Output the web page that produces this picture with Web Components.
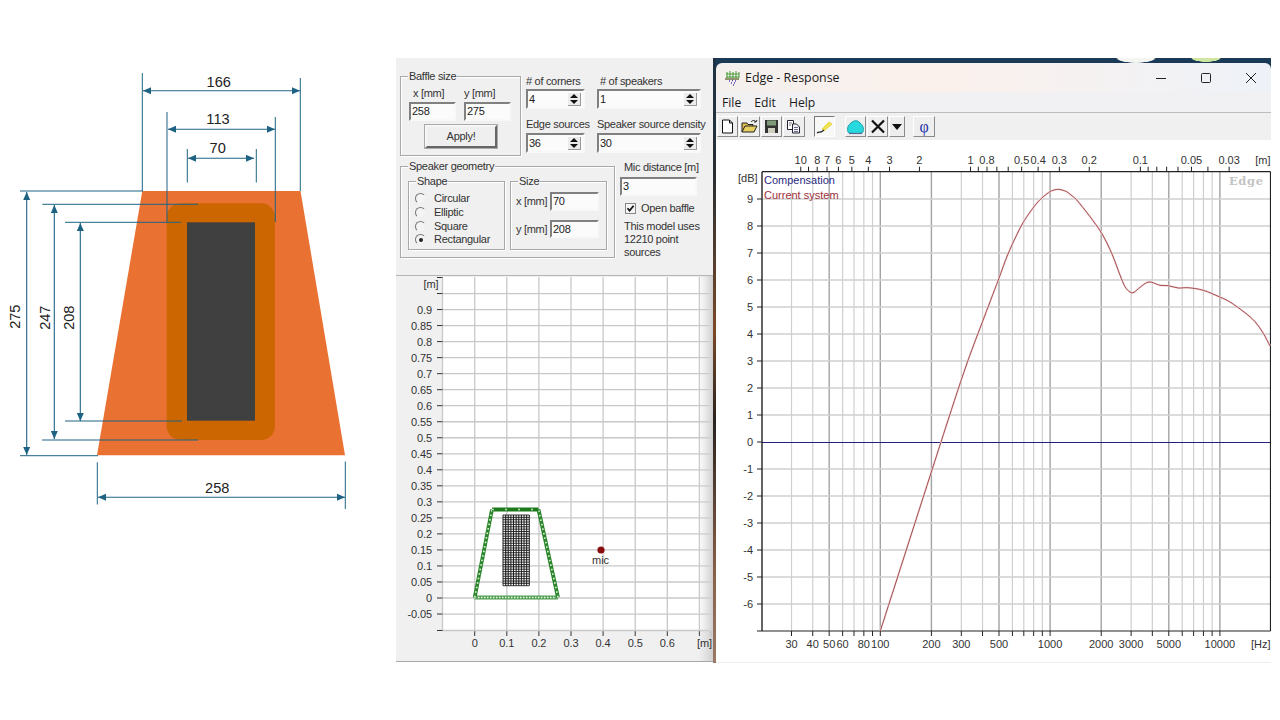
<!DOCTYPE html>
<html>
<head>
<meta charset="utf-8">
<title>Edge baffle</title>
<style>
    html, body { margin: 0; background: #fff; }
    body { width: 1280px; height: 720px; overflow: hidden; font-family: "Liberation Sans", Arial, sans-serif; }
    .page { display: flex; align-items: flex-start; }
</style>
</head>
<body>
<div class="page">
    <dim-drawing></dim-drawing>
    <baffle-panel></baffle-panel>
    <response-window title-text="Edge - Response"></response-window>
</div>

<script>
const LOG_TICKS = [30, 40, 50, 60, 70, 80, 90, 100, 200, 300, 400, 500, 600, 700, 800, 900, 1000, 2000, 3000, 4000, 5000, 6000, 7000, 8000, 9000, 10000]

function line(x1, y1, x2, y2, color, width) {
    return `<line x1="${x1}" y1="${y1}" x2="${x2}" y2="${y2}" stroke="${color}" stroke-width="${width}"/>`
}

function label(x, y, text, anchor, color) {
    return `<text x="${x}" y="${y}" text-anchor="${anchor || 'middle'}" fill="${color || '#333'}">${text}</text>`
}

// runs a smooth path through the sampled points
function smooth(points) {
    let d = `M${points[0][0]} ${points[0][1]}`
    for (let i = 0; i < points.length - 1; i++) {
        const p0 = points[Math.max(i - 1, 0)]
        const p1 = points[i]
        const p2 = points[i + 1]
        const p3 = points[Math.min(i + 2, points.length - 1)]
        d += ` C${p1[0] + (p2[0] - p0[0]) / 6} ${p1[1] + (p2[1] - p0[1]) / 6} ${p2[0] - (p3[0] - p1[0]) / 6} ${p2[1] - (p3[1] - p1[1]) / 6} ${p2[0]} ${p2[1]}`
    }
    return d
}

class DimDrawing extends HTMLElement {
    constructor() {
        super()
        this.attachShadow({ mode: 'open' })
        const blue = '#1f6384'
        const hArrow = (x1, x2, y) => line(x1, y, x2, y, blue, 1.1) +
            `<polygon points="${x1},${y} ${x1 + 8},${y - 3.5} ${x1 + 8},${y + 3.5}" fill="${blue}"/>` +
            `<polygon points="${x2},${y} ${x2 - 8},${y - 3.5} ${x2 - 8},${y + 3.5}" fill="${blue}"/>`
        const vArrow = (x, y1, y2) => line(x, y1, x, y2, blue, 1.1) +
            `<polygon points="${x},${y1} ${x - 3.5},${y1 + 8} ${x + 3.5},${y1 + 8}" fill="${blue}"/>` +
            `<polygon points="${x},${y2} ${x - 3.5},${y2 - 8} ${x + 3.5},${y2 - 8}" fill="${blue}"/>`
        const upText = (x, y, text) => `<text transform="translate(${x} ${y}) rotate(-90)" text-anchor="middle" fill="#222">${text}</text>`

        const ext = [
            [142.3, 73, 142.3, 191], [300.3, 78, 300.3, 191],
            [167, 112, 167, 222], [275.3, 117, 275.3, 222],
            [187.3, 149, 187.3, 182.5], [256.3, 149, 256.3, 182.5],
            [20, 191, 143, 191], [42.3, 204.3, 198, 204.3], [65, 222.3, 181, 222.3],
            [65, 421, 182, 421], [42, 440, 198, 440], [20, 455.7, 98, 455.7],
            [97.3, 462.3, 97.3, 504.5], [345.3, 461.5, 345.3, 509]
        ].map(l => line(l[0], l[1], l[2], l[3], blue, 1)).join('')

        this.shadowRoot.innerHTML = `
            <style>
                :host { display: block; width: 396px; height: 720px; flex: none; }
                svg { display: block; font: 14.6px "Liberation Sans", Arial, sans-serif; }
            </style>
            <svg width="396" height="720" viewBox="0 0 396 720">
                <polygon points="142.3,191 300.5,191 345,455.3 97,455.3" fill="#e97132"/>
                <rect x="166.7" y="203.3" width="108.3" height="236.7" rx="14" fill="#cc6600"/>
                <rect x="187" y="222.3" width="68" height="198.4" fill="#404040"/>
                ${ext}
                ${hArrow(143, 300, 90.7)}
                ${hArrow(168, 275, 129.3)}
                ${hArrow(188, 254, 158.3)}
                ${hArrow(98, 345, 497.3)}
                ${vArrow(26.7, 192, 455)}
                ${vArrow(54.3, 205, 439)}
                ${vArrow(80.3, 223, 421)}
                ${label(218.7, 87, '166', 'middle', '#222')}
                ${label(218, 124.3, '113', 'middle', '#222')}
                ${label(217.7, 153.3, '70', 'middle', '#222')}
                ${label(217.3, 493.3, '258', 'middle', '#222')}
                ${upText(20, 316.7, '275')}
                ${upText(50, 317.7, '247')}
                ${upText(73.5, 317.7, '208')}
            </svg>
        `
    }
}

class UiGroup extends HTMLElement {
    constructor() {
        super()
        this.attachShadow({ mode: 'open' })
        this.shadowRoot.innerHTML = `
            <style>
                :host { display: block; box-sizing: border-box; position: relative; border: 1px solid #a8a8a8; box-shadow: 1px 1px 0 #fff, inset 1px 1px 0 #fff; }
                .legend { position: absolute; left: 7px; top: -7px; padding: 0 1px; background: #f0f0f0; line-height: 13px; white-space: nowrap; }
            </style>
            <div class="legend">${this.getAttribute('label')}</div>
            <slot></slot>
        `
    }
}

class UiField extends HTMLElement {
    constructor() {
        super()
        this.attachShadow({ mode: 'open' })
        const spin = this.hasAttribute('spin')
        this.shadowRoot.innerHTML = `
            <style>
                :host { display: flex; box-sizing: border-box; align-items: center; justify-content: space-between; background: #fbfbfb; border: 2px solid; border-color: #808080 #f8f8f8 #f8f8f8 #808080; padding: 0 1px 0 1px; height: 20px; color: #222; }
                .spin { display: flex; flex-direction: column; gap: 2px; padding: 1px 2px; margin-right: 1px; background: #ececec; border-right: 1px solid #999; border-bottom: 1px solid #999; }
                .up, .down { width: 0; height: 0; border-left: 4px solid transparent; border-right: 4px solid transparent; }
                .up { border-bottom: 4px solid #111; }
                .down { border-top: 4px solid #111; }
            </style>
            <span>${this.getAttribute('value')}</span>
            ${spin ? '<div class="spin"><div class="up"></div><div class="down"></div></div>' : ''}
        `
    }
}

class UiRadio extends HTMLElement {
    constructor() {
        super()
        this.attachShadow({ mode: 'open' })
        this.shadowRoot.innerHTML = `
            <style>
                :host { display: flex; align-items: center; gap: 8px; height: 13.7px; white-space: nowrap; }
                .dot { box-sizing: border-box; width: 11px; height: 11px; border-radius: 50%; border: 1px solid; border-color: #777 #eee #eee #777; background: #f4f4f4; display: flex; align-items: center; justify-content: center; }
                .dot i { width: 4px; height: 4px; border-radius: 50%; background: #222; }
            </style>
            <div class="dot">${this.hasAttribute('checked') ? '<i></i>' : ''}</div><slot></slot>
        `
    }
}

class UiCheck extends HTMLElement {
    constructor() {
        super()
        this.attachShadow({ mode: 'open' })
        this.shadowRoot.innerHTML = `
            <style>
                :host { display: flex; align-items: center; gap: 5px; white-space: nowrap; height: 11px; }
                svg { display: block; flex: none; }
            </style>
            <svg width="11" height="11" viewBox="0 0 11 11">
                <rect x="0.5" y="0.5" width="10" height="10" fill="#f4f4f4" stroke="#888"/>
                <path d="M2.5 5.2 L4.6 7.6 L8.6 2.8" fill="none" stroke="#111" stroke-width="1.7"/>
            </svg>
            <slot></slot>
        `
    }
}

class UiButton extends HTMLElement {
    constructor() {
        super()
        this.attachShadow({ mode: 'open' })
        this.shadowRoot.innerHTML = `
            <style>
                :host { display: flex; box-sizing: border-box; align-items: center; justify-content: center; height: 23px; border: 2px solid; border-color: #f6f6f6 #666 #666 #f6f6f6; outline: 1px solid #aaa; background: #efefef; }
            </style>
            <slot></slot>
        `
    }
}

class PositionPlot extends HTMLElement {
    constructor() {
        super()
        this.attachShadow({ mode: 'open' })
        const X = v => 474.7 + v * 321
        const Y = v => 598 - v * 320.5
        const grey = '#c8c8c8'
        let grid = ''
        for (let i = 0; i <= 7; i++) {
            const x = X(i / 10)
            grid += line(x, 277, x, 630.5, grey, 1.3) + line(x, 630.5, x, 636, '#333', 1)
            if (i < 7) grid += label(x, 647, i === 0 ? '0' : (i / 10).toFixed(1))
        }
        grid += line(442.5, 277, 442.5, 630.5, grey, 1.3) + line(711, 630.5, 711, 636, '#333', 1)
        grid += line(442, 630.5, 713, 630.5, grey, 1.3)
        for (let i = -1; i <= 19; i++) {
            const v = i * 0.05
            const y = Y(v)
            grid += line(442.5, y, 713, y, grey, 1.3) + line(437, y, 442.5, y, '#333', 1)
            if (i !== 19) grid += label(432, y + 4, i === 0 ? '0' : String(+v.toFixed(2)), 'end')
        }
        grid += line(437, 277.5, 442.5, 277.5, '#333', 1) + line(437, 630.5, 442.5, 630.5, '#333', 1)
        grid += label(431, 288, '[m]')

        // baffle outline with its edge sources
        const edge = (x1, y1, x2, y2, step, fill, dark) => {
            const len = Math.hypot(x2 - x1, y2 - y1)
            let out = line(x1, y1, x2, y2, dark, 3.8)
            for (let d = 1; d < len; d += step) {
                const cx = x1 + (x2 - x1) * d / len
                const cy = y1 + (y2 - y1) * d / len
                out += `<rect x="${cx - 0.8}" y="${cy - 0.8}" width="1.6" height="1.6" fill="${fill}"/>`
            }
            return out
        }
        const baffle = edge(474.7, 597.5, 558, 597.5, 3, '#eaf5ea', '#4c9c4c') +
            edge(474.7, 597.5, 492, 509.5, 4.6, '#dff0df', '#2b862b') +
            edge(558, 597.5, 538.5, 509.5, 4.6, '#dff0df', '#2b862b') +
            edge(492, 509.5, 538.5, 509.5, 13, '#dff0df', '#1c7a1c')

        let speaker = ''
        for (let i = 0; i <= 10; i++) {
            const x = 503 + i * 2.63
            speaker += line(x, 515, x, 585.7, '#1c1c1c', 1)
        }
        for (let i = 0; i <= 30; i++) {
            const y = 515 + i * 2.357
            speaker += line(503, y, 529.3, y, '#1c1c1c', 0.9)
        }

        this.shadowRoot.innerHTML = `
            <style>
                :host { display: block; height: 385px; background: #f0f0f0; }
                svg { display: block; font: 11px "Liberation Sans", Arial, sans-serif; letter-spacing: -0.1px; }
            </style>
            <svg width="317" height="385" viewBox="396 276 317 385">
                <defs>
                    <linearGradient id="fade" x1="0" x2="1" y1="0" y2="0">
                        <stop offset="0" stop-color="#d8d8d8" stop-opacity="0"/>
                        <stop offset="1" stop-color="#cfcfcf"/>
                    </linearGradient>
                </defs>
                <rect x="442.5" y="277" width="271" height="353.5" fill="#fff"/>
                ${grid}
                ${baffle}
                ${speaker}
                <circle cx="601" cy="550" r="3.6" fill="#8a0d0d"/>
                ${label(600.5, 564, 'mic')}
                <rect x="698" y="276" width="15" height="385" fill="url(#fade)"/>
                ${label(704.5, 647, '[m]')}
            </svg>
        `
    }
}

class BafflePanel extends HTMLElement {
    constructor() {
        super()
        this.attachShadow({ mode: 'open' })
        this.shadowRoot.innerHTML = `
            <style>
                :host { display: block; box-sizing: border-box; flex: none; width: 317px; height: 604px; margin-top: 58px; background: #f0f0f0; border-bottom: 2px solid #a8a8a8; font: 11px/13px "Liberation Sans", Arial, sans-serif; letter-spacing: -0.3px; color: #333; }
                .form { box-sizing: border-box; height: 218px; padding: 16px 0 0 4px; border-bottom: 1px solid #b4b4b4; }
                .top { display: flex; align-items: flex-start; height: 92px; }
                .baffle { width: 121px; height: 80px; margin-top: 2px; padding: 10px 0 0 8px; box-sizing: border-box; }
                .xy { display: grid; grid-template-columns: 47px 47px; column-gap: 8px; }
                .xy span { height: 15px; line-height: 13px; }
                .xy span:first-child { padding-left: 4px; }
                .xy ui-field { height: 19px; }
                .baffle ui-button { width: 72px; margin: 4px 0 0 16px; }
                .counts { display: grid; grid-template-columns: 59px 104px; grid-template-rows: 15px 20px 24px 20px; column-gap: 12px; margin-left: 5px; }
                .counts span { white-space: nowrap; align-self: center; }
                .counts .lbl2 { align-self: end; height: 16px; line-height: 15px; }
                .counts .col2 { padding-left: 3px; }
                .bottom { display: flex; align-items: flex-start; }
                .geometry { box-sizing: border-box; width: 215px; height: 92px; padding: 14px 0 0 7px; display: flex; gap: 5px; }
                .shape, .size { box-sizing: border-box; width: 97px; height: 69px; }
                .shape { padding: 10px 0 0 6px; }
                .size { padding: 10px 0 0 5px; display: grid; grid-template-columns: 34px 49px; grid-template-rows: 19px 18px; row-gap: 9px; align-items: center; }
                .size ui-field { height: 100%; }
                .mic { margin: -6px 0 0 5px; width: 92px; }
                .mic .head { padding-left: 4px; height: 15px; line-height: 15px; white-space: nowrap; }
                .mic ui-field { width: 77px; height: 19px; margin-top: 2px; }
                .mic ui-check { margin: 7px 0 0 5px; }
                .mic p { margin: 6px 0 0 4px; line-height: 13px; }
            </style>
            <div class="form">
                <div class="top">
                    <ui-group class="baffle" label="Baffle size">
                        <div class="xy">
                            <span>x [mm]</span><span>y [mm]</span>
                            <ui-field value="258"></ui-field><ui-field value="275"></ui-field>
                        </div>
                        <ui-button>Apply!</ui-button>
                    </ui-group>
                    <div class="counts">
                        <span># of corners</span><span class="col2"># of speakers</span>
                        <ui-field spin value="4"></ui-field><ui-field spin value="1"></ui-field>
                        <span class="lbl2">Edge sources</span><span class="lbl2">Speaker source density</span>
                        <ui-field spin value="36"></ui-field><ui-field spin value="30"></ui-field>
                    </div>
                </div>
                <div class="bottom">
                    <ui-group class="geometry" label="Speaker geometry">
                        <ui-group class="shape" label="Shape">
                            <ui-radio>Circular</ui-radio>
                            <ui-radio>Elliptic</ui-radio>
                            <ui-radio>Square</ui-radio>
                            <ui-radio checked>Rectangular</ui-radio>
                        </ui-group>
                        <ui-group class="size" label="Size">
                            <span>x [mm]</span><ui-field value="70"></ui-field>
                            <span>y [mm]</span><ui-field value="208"></ui-field>
                        </ui-group>
                    </ui-group>
                    <div class="mic">
                        <div class="head">Mic distance [m]</div>
                        <ui-field value="3"></ui-field>
                        <ui-check>Open baffle</ui-check>
                        <p>This model uses<br>12210 point<br>sources</p>
                    </div>
                </div>
            </div>
            <position-plot></position-plot>
        `
    }
}

class ResponsePlot extends HTMLElement {
    constructor() {
        super()
        this.attachShadow({ mode: 'open' })
        const X = f => 880.3 + 169.8 * (Math.log10(f) - 2)
        const Y = db => 442 - db * 27
        const L = 762, R = 1270.5, T = 171.7, B = 631
        const axis = '#222'
        const major = [50, 100, 200, 500, 1000, 2000, 5000, 10000]
        let g = ''
        for (const f of LOG_TICKS) {
            const x = X(f)
            g += line(x, T, x, B, major.includes(f) ? '#a2a2a2' : '#cfcfcf', major.includes(f) ? 1.4 : 1.2)
            g += line(x, B, x, B + 5, axis, 1)
        }
        for (let db = -6; db <= 9; db++) {
            const y = Y(db)
            if (db !== 0) g += line(L, y, R, y, '#cfcfcf', 1.3)
            g += line(L - 5, y, L, y, axis, 1) + label(753, y + 4, db, 'end')
        }
        g += line(L, 442.5, R, 442.5, '#22227a', 1)
        g += line(L - 5, B, R, B, axis, 1.2)
        g += line(L, T, R, T, axis, 1.2) + line(L, T, L, B, axis, 1.4) + line(R, T, R, B, axis, 1.2)

        for (const m of [10, 9, 8, 7, 6, 5, 4, 3, 2, 1, 0.9, 0.8, 0.7, 0.6, 0.5, 0.4, 0.3, 0.2, 0.1, 0.09, 0.08, 0.07, 0.06, 0.05, 0.04, 0.03]) {
            const x = X(340 / m)
            g += line(x, T - 5, x, T, axis, 1)
        }
        for (const m of [10, 8, 7, 6, 5, 4, 3, 2, 1, 0.8, 0.5, 0.4, 0.3, 0.2, 0.1, 0.05, 0.03]) {
            g += label(X(340 / m), 164, m)
        }
        g += label(1270.5, 164, '[m]', 'end')
        for (const f of [30, 40, 50, 60, 80, 100, 200, 300, 500, 1000, 2000, 3000, 5000, 10000]) {
            g += label(X(f), 648, f)
        }
        g += label(1270.5, 648, '[Hz]', 'end')
        g += label(738, 182, '[dB]', 'start')

        const curve = [[880.3, 631], [941, 442], [965, 369], [982, 323], [998.3, 280], [1008, 254], [1020, 228.3], [1028, 215], [1036.7, 203.3], [1043, 197], [1050, 191.7], [1054, 190], [1058.3, 189.3], [1062, 190], [1066.7, 191.7], [1071, 195], [1076.7, 200], [1090, 216.7], [1101.7, 233.3], [1111.7, 253.3], [1120, 275], [1125, 286.7], [1130, 292], [1134, 292.3], [1140, 287.3], [1146.7, 282.7], [1151.7, 282.3], [1160, 285.3], [1168.3, 285.7], [1178.3, 288], [1188.3, 287.7], [1203.3, 290.3], [1219.7, 297], [1230, 302], [1245, 312.7], [1255, 321.7], [1263.3, 333.3], [1270, 346]]
        const d = smooth(curve)

        this.shadowRoot.innerHTML = `
            <style>
                :host { display: block; flex: 1; background: #fff; border-bottom: 1px solid #eeeeee; }
                svg { display: block; font: 11px "Liberation Sans", Arial, sans-serif; }
                .edge { font: bold 11.5px "DejaVu Serif", serif; letter-spacing: 0.6px; }
            </style>
            <svg width="555" height="522" viewBox="716 140 555 522">
                ${g}
                <path d="${d}" fill="none" stroke="#f4d8d8" stroke-width="2"/>
                <path d="${d}" fill="none" stroke="#9a4044" stroke-width="0.9"/>
                ${label(764, 184, 'Compensation', 'start', '#2a2a80')}
                ${label(764, 199, 'Current system', 'start', '#a03038')}
                <text class="edge" x="1229" y="185" fill="#c4c4c4">Edge</text>
            </svg>
        `
    }
}

class ToolButton extends HTMLElement {
    constructor() {
        super()
        this.attachShadow({ mode: 'open' })
        const pressed = this.hasAttribute('pressed')
        this.shadowRoot.innerHTML = `
            <style>
                :host { display: flex; box-sizing: border-box; align-items: center; justify-content: center; width: ${this.getAttribute('w') || 21}px; height: 21px; background: ${pressed ? '#f8f8f6' : '#eeeeee'}; border: 1px solid; border-color: ${pressed ? '#777 #fff #fff #777' : '#fff #8a8a8a #8a8a8a #fff'}; }
            </style>
            <slot></slot>
        `
    }
}

class ResponseWindow extends HTMLElement {
    constructor() {
        super()
        this.attachShadow({ mode: 'open' })
        this.shadowRoot.innerHTML = `
            <style>
                :host { display: flex; flex-direction: column; flex: none; box-sizing: border-box; width: 558px; height: 605px; margin-top: 58px; border-left: 3px solid; border-image: linear-gradient(#1d3346 0, #2b2f33 20%, #7a4a28 45%, #2a2320 60%, #8a6048 85%, #9a7a66 100%) 1; background: #1b3a57; }
                .strip { height: 5px; background: radial-gradient(ellipse 20px 5px at 420px 0, #f4f4f0 90%, transparent), radial-gradient(ellipse 15px 4px at 490px 0, #cfe6a0 90%, transparent), #1b3a57; }
                .title { display: flex; align-items: center; height: 29px; padding-left: 8px; border-radius: 6px 6px 0 0; background: linear-gradient(90deg, #f4f0ee 0, #fbf1ec 40%, #eef2f8 100%); font: 12.4px "Open Sans", "Noto Sans", sans-serif; color: #1a1a1a; }
                .title svg.logo { margin-right: 4px; }
                .title span { flex: 1; }
                .ctl { display: flex; gap: 33px; padding-right: 14px; }
                .ctl svg { display: block; }
                .menu { display: flex; gap: 13px; height: 20px; align-items: center; padding-left: 6px; background: #f1f1f3; border-bottom: 1px solid #bdbdbd; font: 12.2px "Open Sans", "Noto Sans", sans-serif; color: #1a1a1a; }
                .tools { display: flex; align-items: center; height: 27px; padding-left: 1px; box-sizing: border-box; background: #f0f0f0; }
                .tools tool-button + tool-button { margin-left: 1px; }
                .phi { font: 16px "Liberation Serif", serif; color: #2233aa; }
            </style>
            <div class="strip"></div>
            <div class="title">
                <svg class="logo" width="17" height="16" viewBox="0 0 17 16">
                    <path d="M3 2v6M6 1v7M9 2v6M12 1v7M15 2v6M2 4h13M2 7h13" stroke="#4a9a3a" stroke-width="1" fill="none"/>
                    <path d="M1 9h14" stroke="#6a6a3a" stroke-width="1.4"/>
                    <path d="M5 11h1M8 10.500h1M11 11h1M7 13h1M10 13h1M9 15h1" stroke="#5040b0" stroke-width="1.4"/>
                </svg>
                <span>${this.getAttribute('title-text')}</span>
                <div class="ctl">
                    <svg width="12" height="12" viewBox="0 0 12 12"><path d="M1 6.500h10" stroke="#222" stroke-width="1"/></svg>
                    <svg width="12" height="12" viewBox="0 0 12 12"><rect x="1.500" y="1.500" width="9" height="9" rx="1" fill="none" stroke="#222"/></svg>
                    <svg width="12" height="12" viewBox="0 0 12 12"><path d="M1 1l10 10M11 1L1 11" stroke="#222" stroke-width="1"/></svg>
                </div>
            </div>
            <div class="menu"><span>File</span><span>Edit</span><span>Help</span></div>
            <div class="tools">
                <tool-button><svg width="13" height="15" viewBox="0 0 13 15"><path d="M1.500 1h7l3 3v10h-10z" fill="#fff" stroke="#111"/><path d="M8.500 1v3h3" fill="none" stroke="#111"/></svg></tool-button>
                <tool-button><svg width="18" height="15" viewBox="0 0 18 15"><path d="M1 13V4h5l1 1.500h5V8" fill="#e0c050" stroke="#222"/><path d="M1 13l3-6h12l-3 6z" fill="#e8d060" stroke="#222"/><path d="M10 3c1.500-2 4-2 5 0M15 3l1-2M15 3l-2 0" fill="none" stroke="#222"/></svg></tool-button>
                <tool-button><svg width="15" height="15" viewBox="0 0 15 15"><path d="M1 1h13v13H1z" fill="#333"/><rect x="3" y="1.500" width="9" height="5" fill="#7f9a78"/><rect x="4" y="9" width="7" height="5" fill="#cfcfc0"/></svg></tool-button>
                <tool-button w="22"><svg width="16" height="15" viewBox="0 0 16 15"><path d="M1.500 1.500h6v9h-6z" fill="#fff" stroke="#223"/><path d="M6.500 5h4l3 3v6h-7z" fill="#f4f4ff" stroke="#223"/><path d="M8 8.500h4M8 10.500h4M8 12.500h4M3 4h3M3 6h2" stroke="#446" stroke-width="0.800"/></svg></tool-button>
                <tool-button pressed style="margin-left:9px"><svg width="17" height="15" viewBox="0 0 17 15"><path d="M6 10L13 3l3 2-8 7z" fill="#f2e24a" stroke="#e8d040" stroke-width="0.800"/><path d="M1 14c2-2 3 0 5-1.500L8 11" fill="none" stroke="#222" stroke-width="1.200"/></svg></tool-button>
                <tool-button style="margin-left:10px"><svg width="19" height="16" viewBox="0 0 19 16"><path d="M2 13c-1-4 0-7 3-9 3-3 7-3 9 0 3 2 4 5 3 9 0 2-15 2-15 0z" fill="#27d8dc" stroke="#1aa0a8"/><path d="M3 14.500h13" stroke="#5a6a9a" stroke-width="1.200"/></svg></tool-button>
                <tool-button><svg width="16" height="15" viewBox="0 0 16 15"><path d="M2 1.500l12 12M14 1.500l-12 12" stroke="#111" stroke-width="2.200"/></svg></tool-button>
                <tool-button w="16"><svg width="10" height="6" viewBox="0 0 10 6"><path d="M0 0h10L5 6z" fill="#111"/></svg></tool-button>
                <tool-button w="22" style="margin-left:8px"><span class="phi">φ</span></tool-button>
            </div>
            <response-plot></response-plot>
        `
    }
}

customElements.define('dim-drawing', DimDrawing)
customElements.define('ui-group', UiGroup)
customElements.define('ui-field', UiField)
customElements.define('ui-radio', UiRadio)
customElements.define('ui-check', UiCheck)
customElements.define('ui-button', UiButton)
customElements.define('position-plot', PositionPlot)
customElements.define('baffle-panel', BafflePanel)
customElements.define('response-plot', ResponsePlot)
customElements.define('tool-button', ToolButton)
customElements.define('response-window', ResponseWindow)
</script>
</body>
</html>
